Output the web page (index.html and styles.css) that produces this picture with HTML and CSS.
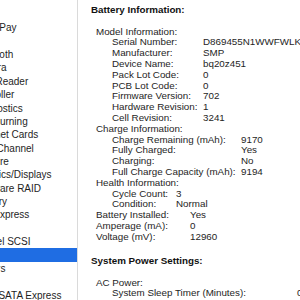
FILE: index.html
```html
<!DOCTYPE html>
<html lang="en">
<head>
    <meta charset="UTF-8">
    <title>System Information - Power</title>
    <link rel="stylesheet" href="styles.css">
</head>
<body>
    <div class="window">
        <aside class="sidebar">
            <ul class="list">
                <li>ATA</li>
                <li>Apple Pay</li>
                <li>Audio</li>
                <li>Bluetooth</li>
                <li>Camera</li>
                <li>Card Reader</li>
                <li>Controller</li>
                <li>Diagnostics</li>
                <li>Disc Burning</li>
                <li>Ethernet Cards</li>
                <li>Fibre Channel</li>
                <li>FireWire</li>
                <li>Graphics/Displays</li>
                <li>Hardware RAID</li>
                <li>Memory</li>
                <li>NVMExpress</li>
                <li>PCI</li>
                <li>Parallel SCSI</li>
                <li class="selected">Power</li>
                <li>Printers</li>
                <li>SAS</li>
                <li>SATA/SATA Express</li>
            </ul>
        </aside>
        <main class="detail">
            <h2 class="heading">Battery Information:</h2>
            <div class="group">
                <div class="group-title">Model Information:</div>
                <div class="rows model">
                    <span>Serial Number:</span><span>D869455N1WWFWLKC</span>
                    <span>Manufacturer:</span><span>SMP</span>
                    <span>Device Name:</span><span>bq20z451</span>
                    <span>Pack Lot Code:</span><span>0</span>
                    <span>PCB Lot Code:</span><span>0</span>
                    <span>Firmware Version:</span><span>702</span>
                    <span>Hardware Revision:</span><span>1</span>
                    <span>Cell Revision:</span><span>3241</span>
                </div>
            </div>
            <div class="group">
                <div class="group-title">Charge Information:</div>
                <div class="rows charge">
                    <span>Charge Remaining (mAh):</span><span>9170</span>
                    <span>Fully Charged:</span><span>Yes</span>
                    <span>Charging:</span><span>No</span>
                    <span>Full Charge Capacity (mAh):</span><span>9194</span>
                </div>
            </div>
            <div class="group">
                <div class="group-title">Health Information:</div>
                <div class="rows health">
                    <span>Cycle Count:</span><span>3</span>
                    <span>Condition:</span><span>Normal</span>
                </div>
            </div>
            <div class="rows top">
                <span>Battery Installed:</span><span>Yes</span>
                <span>Amperage (mA):</span><span>0</span>
                <span>Voltage (mV):</span><span>12960</span>
            </div>

            <h2 class="heading second">System Power Settings:</h2>
            <div class="group">
                <div class="group-title">AC Power:</div>
                <div class="rows ac">
                    <span>System Sleep Timer (Minutes):</span><span>0</span>
                </div>
            </div>
        </main>
    </div>
</body>
</html>
```

FILE: styles.css
```css
body {
    margin: 0;
    font-family: "Liberation Sans", Arial, sans-serif;
    color: #1e1e1e;
    background-color: #fff;
    overflow: hidden;
}
.window {
    display: flex;
    height: 300px;
    width: 300px;
    overflow: hidden;
}
.sidebar {
    width: 77px;
    flex-shrink: 0;
    border-right: 1px solid #dadada;
    overflow: hidden;
    background-color: #fff;
}
.list {
    list-style: none;
    margin: 0;
    padding: 8px 0 0 0;
    font-size: 10px;
}
.list li {
    height: 13.36px;
    line-height: 13.36px;
    white-space: nowrap;
    text-indent: -29px;
}
.list li.selected {
    background-color: #1f6de3;
    color: #fff;
}
.detail {
    flex: 1;
    padding: 5px 0 0 13px;
    font-size: 9.8px;
    line-height: 10.8px;
    white-space: nowrap;
    overflow: hidden;
}
.heading {
    margin: 0 0 10.8px 0;
    font-size: 9.8px;
    line-height: 10.8px;
    font-weight: bold;
    color: #111;
}
.heading.second {
    margin-top: 13.4px;
}
.group-title {
    padding-left: 5px;
}
.rows {
    display: grid;
    padding-left: 21px;
}
.model {
    grid-template-columns: 91px auto;
}
.charge {
    grid-template-columns: 129px auto;
}
.health {
    grid-template-columns: 64px auto;
}
.top {
    padding-left: 5px;
    grid-template-columns: 94px auto;
}
.ac {
    grid-template-columns: 185px auto;
}
```
